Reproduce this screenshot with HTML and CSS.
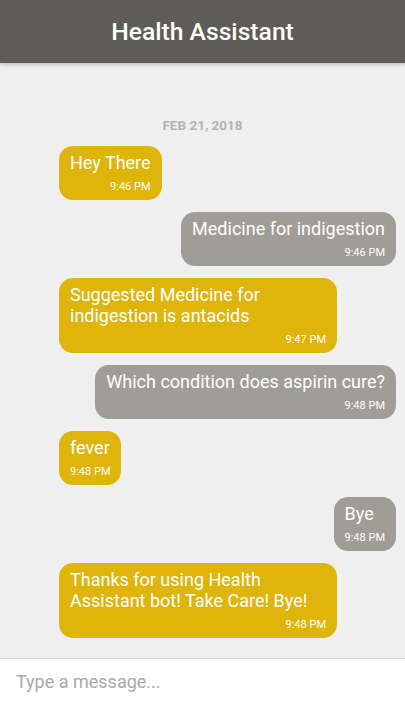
FILE: index.html
```html
<!DOCTYPE html>
<html lang="en">
<head>
<meta charset="utf-8">
<title>Health Assistant</title>
<link rel="stylesheet" href="styles.css">
</head>
<body>
<div class="app">
  <header class="topbar"><h1 class="title">Health Assistant</h1></header>
  <main class="chat">
    <div class="date">FEB 21, 2018</div>
    <div class="msg bot"><div class="text">Hey There</div><div class="time">9:46 PM</div></div>
    <div class="msg user"><div class="text">Medicine for indigestion</div><div class="time">9:46 PM</div></div>
    <div class="msg bot"><div class="text">Suggested Medicine for indigestion is antacids</div><div class="time">9:47 PM</div></div>
    <div class="msg user"><div class="text">Which condition does aspirin cure?</div><div class="time">9:48 PM</div></div>
    <div class="msg bot"><div class="text">fever</div><div class="time">9:48 PM</div></div>
    <div class="msg user"><div class="text">Bye</div><div class="time">9:48 PM</div></div>
    <div class="msg bot"><div class="text">Thanks for using Health Assistant bot! Take Care! Bye!</div><div class="time">9:48 PM</div></div>
  </main>
  <footer class="composer"><input class="input" type="text" placeholder="Type a message..."></footer>
</div>
</body>
</html>
```
FILE: styles.css
```css
* { box-sizing: border-box; }
html, body { margin: 0; padding: 0; }
body {
  font-family: Roboto, "Liberation Sans", sans-serif;
  background: #efefef;
}
.app {
  width: 405px;
  height: 720px;
  display: flex;
  flex-direction: column;
  overflow: hidden;
}
.topbar {
  height: 63px;
  flex: none;
  background: #5e5c57;
  display: flex;
  align-items: center;
  justify-content: center;
  box-shadow: 0 2px 3px rgba(0,0,0,0.18);
  position: relative;
  z-index: 1;
}
.title {
  margin: 0;
  color: #fff;
  font-size: 24.7px;
  font-weight: 500;
}
.chat {
  flex: 1;
  display: flex;
  flex-direction: column;
  gap: 12px;
  padding: 54px 9px 0 59px;
}
.date {
  text-align: center;
  font-size: 13.5px;
  line-height: 17px;
  font-weight: 700;
  color: #b3b3b3;
  margin-left: -50px;
}
.msg {
  border-radius: 14px;
  padding: 6px 11px 6px;
  color: #fff;
}
.msg.bot { align-self: flex-start; background: #dfb40b; max-width: 278px; }
.msg.user { align-self: flex-end; background: #9f9d96; max-width: 310px; }
.text {
  font-size: 18px;
  line-height: 21px;
}
.time {
  font-size: 11px;
  line-height: 14px;
  margin-top: 7px;
  text-align: right;
  white-space: nowrap;
}
.composer {
  height: 62px;
  flex: none;
  background: #fff;
  border-top: 1px solid #dcdcdc;
  display: flex;
  align-items: flex-start;
  padding: 12px 16px 0;
}
.input {
  border: none;
  outline: none;
  font-family: Roboto, "Liberation Sans", sans-serif;
  font-size: 18px;
  line-height: 22px;
  height: 22px;
  color: #333;
  width: 100%;
  padding: 0;
  background: transparent;
}
.input::placeholder { color: #a9a9a9; }
```
